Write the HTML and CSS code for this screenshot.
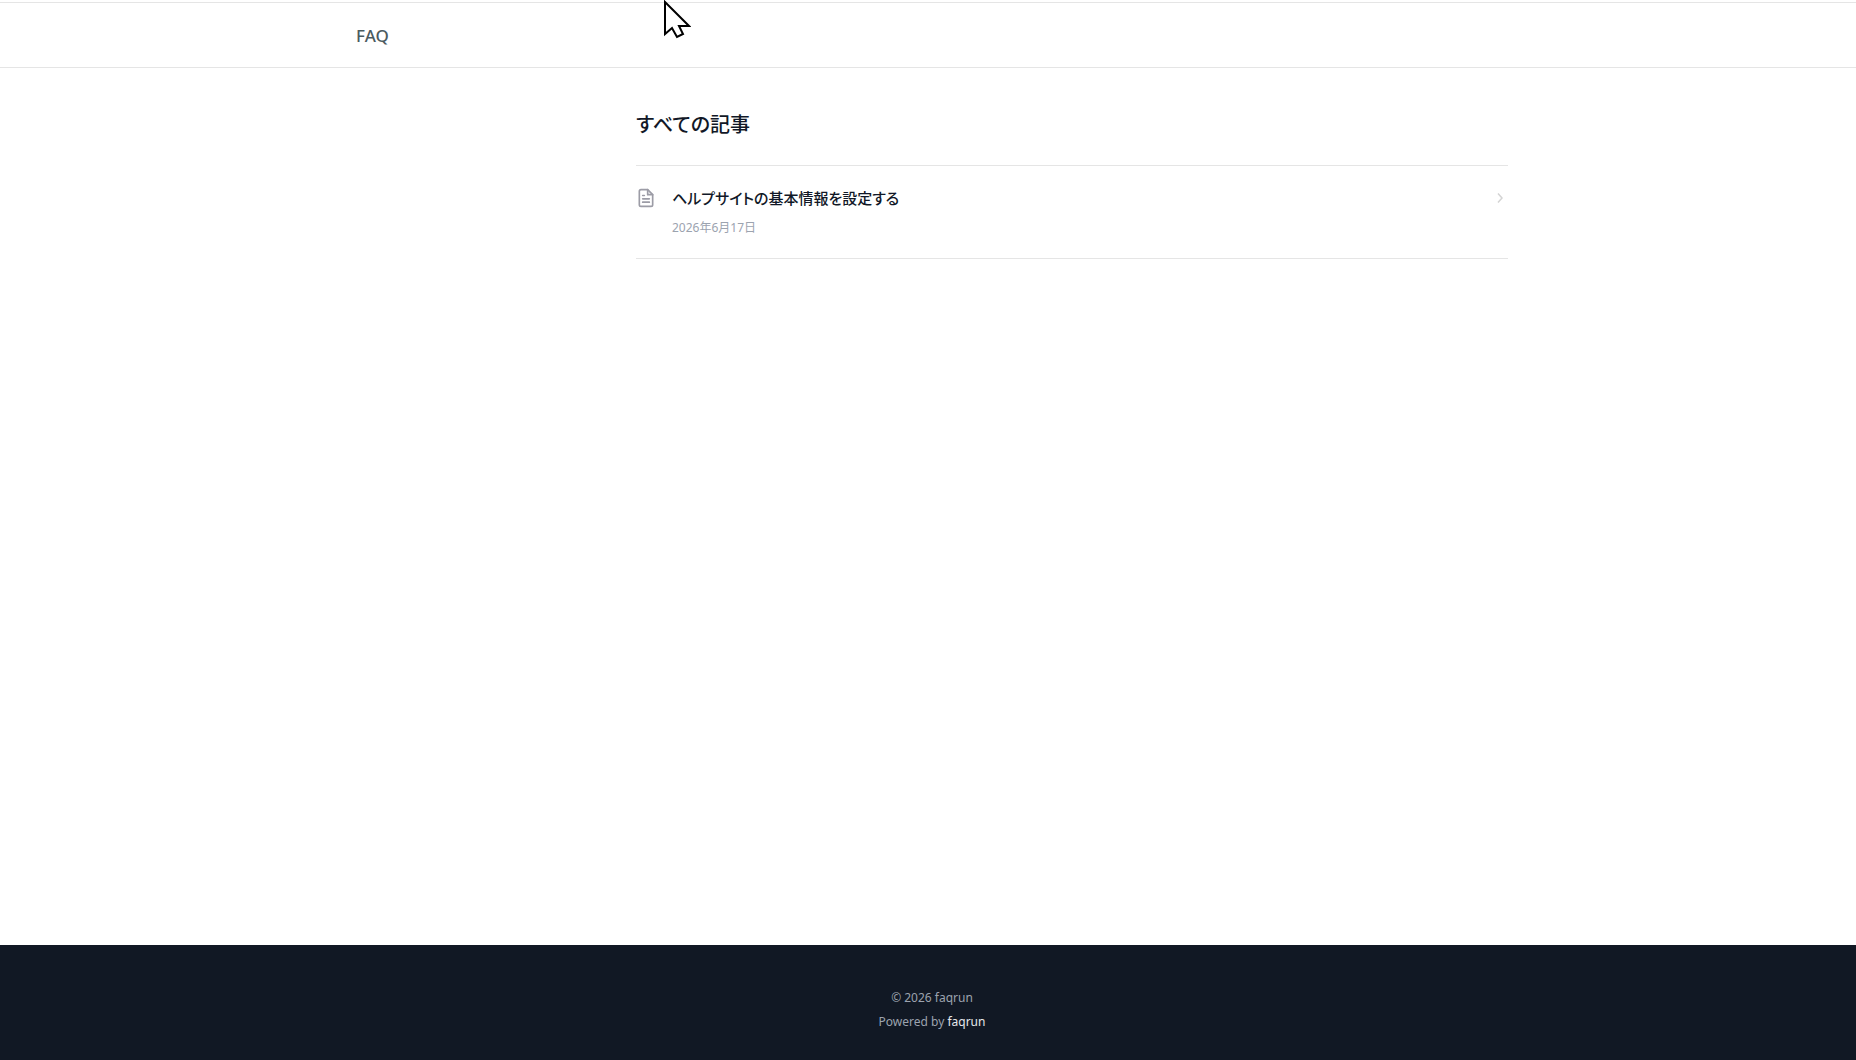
FILE: index.html
```html
<!DOCTYPE html>
<html lang="ja">
<head>
<meta charset="utf-8">
<meta name="viewport" content="width=device-width, initial-scale=1">
<title>FAQ</title>
<link rel="stylesheet" href="styles.css">
</head>
<body>
<header class="site-header">
  <nav class="container">
    <a class="nav-link" href="#">FAQ</a>
  </nav>
</header>

<main class="container main">
  <section class="articles">
    <h1 class="articles-title">すべての記事</h1>
    <ul class="article-list">
      <li>
        <a class="article" href="#">
          <svg class="article-icon" viewBox="0 0 24 24" fill="none" stroke="currentColor" stroke-width="2" stroke-linecap="round" stroke-linejoin="round" aria-hidden="true">
            <path d="M14 2H6a2 2 0 0 0-2 2v16a2 2 0 0 0 2 2h12a2 2 0 0 0 2-2V8z"/>
            <path d="M14 2v6h6M8 9h2M8 13h8M8 17h8"/>
          </svg>
          <div class="article-body">
            <h2 class="article-title">ヘルプサイトの基本情報を設定する</h2>
            <time class="article-date" datetime="2026-06-17">2026年6月17日</time>
          </div>
          <svg class="article-arrow" viewBox="0 0 16 16" fill="none" stroke="currentColor" stroke-width="1.5" aria-hidden="true">
            <path d="M6 3.5l4 4.5-4 4.5"/>
          </svg>
        </a>
      </li>
    </ul>
  </section>
</main>

<footer class="site-footer">
  <p>© 2026 faqrun</p>
  <p>Powered by <a href="#">faqrun</a></p>
</footer>

<!-- mouse pointer -->
<svg class="pointer" viewBox="0 0 28 40" aria-hidden="true">
  <path d="M2 2V34L9 28L14 37L20 34L16 26H26Z" fill="#fff" stroke="#000" stroke-width="2"/>
</svg>
</body>
</html>
```
FILE: styles.css
```css
* {
  box-sizing: border-box;
}

body {
  margin: 0;
  min-height: 100vh;
  display: flex;
  flex-direction: column;
  background: #fff;
  color: #111827;
  font-family: "Noto Sans", "Noto Sans CJK JP", sans-serif;
  font-size: 16px;
  line-height: 24px;
}

a {
  color: inherit;
  text-decoration: none;
}

.site-header,
.main,
.site-footer {
  padding-left: 8px;
}

.container {
  width: 100%;
  max-width: 1160px;
  margin: 0 auto;
}

/* Header */
.site-header {
  margin-top: 2px;
  padding-top: 21px;
  padding-bottom: 19px;
  border-top: 1px solid #e5e5e5;
  border-bottom: 1px solid #e5e5e5;
}

.site-header .container {
  max-width: 1152px;
}

.nav-link {
  display: block;
  width: max-content;
  color: #4b5b5f;
  font-size: 17px;
  font-weight: 500;
}

/* Articles */
.main {
  flex: 1;
  display: grid;
  grid-template-columns: 240px minmax(0, 1fr);
  column-gap: 40px;
  padding-top: 40px;
}

.articles {
  grid-column: 2;
}

.articles-title {
  margin: 0 0 25px;
  font-family: "Noto Sans CJK JP", sans-serif;
  font-size: 20px;
  font-weight: 500;
  line-height: 32px;
  font-feature-settings: "palt";
}

.article-list {
  margin: 0;
  padding: 0;
  list-style: none;
  border-top: 1px solid #e5e5e5;
}

.article {
  display: flex;
  align-items: flex-start;
  padding: 20px 0;
  border-bottom: 1px solid #e5e5e5;
}

.article-icon {
  width: 20px;
  height: 20px;
  margin: 2px 16px 0 0;
  color: #9c9ca6;
}

.article-body {
  flex: 1;
}

.article-title {
  margin: 0 0 8px;
  font-family: "Noto Sans CJK JP", sans-serif;
  font-size: 15px;
  font-weight: 500;
  line-height: 24px;
  font-feature-settings: "palt";
}

.article-date {
  display: block;
  color: #9ca3af;
  font-size: 12px;
  line-height: 20px;
}

.article-arrow {
  width: 16px;
  height: 16px;
  margin-top: 4px;
  color: #d4d4d4;
}

/* Footer */
.site-footer {
  padding-top: 41px;
  padding-bottom: 26px;
  background: #111824;
  color: #9ca3af;
  font-size: 12px;
  line-height: 24px;
  text-align: center;
}

.site-footer p {
  margin: 0;
}

.site-footer a {
  color: #e5e7eb;
}

.pointer {
  position: absolute;
  top: 0;
  left: 663px;
  width: 28px;
  height: 40px;
}
```
